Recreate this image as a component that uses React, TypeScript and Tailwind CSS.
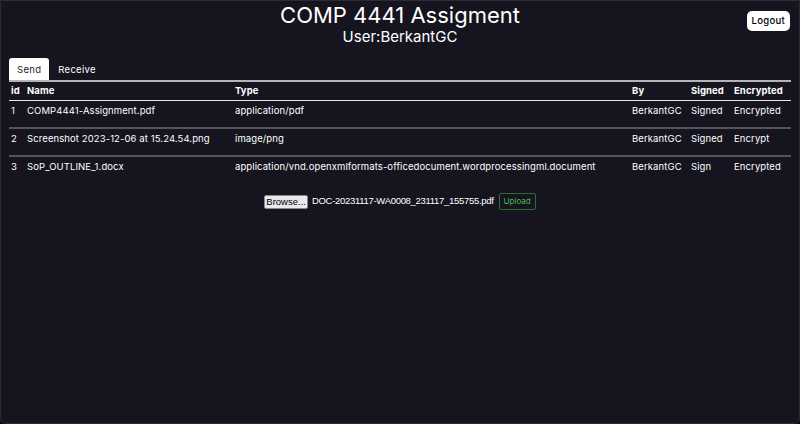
import { useState } from 'react';

const files = [
  { id: 1, name: 'COMP4441-Assignment.pdf', type: 'application/pdf', by: 'BerkantGC', signed: 'Signed', encrypted: 'Encrypted' },
  { id: 2, name: 'Screenshot 2023-12-06 at 15.24.54.png', type: 'image/png', by: 'BerkantGC', signed: 'Signed', encrypted: 'Encrypt' },
  { id: 3, name: 'SoP_OUTLINE_1.docx', type: 'application/vnd.openxmlformats-officedocument.wordprocessingml.document', by: 'BerkantGC', signed: 'Sign', encrypted: 'Encrypted' },
];

export default function App() {
  const [tab, setTab] = useState<'send' | 'receive'>('send');

  const tabClass = (active: boolean) =>
    active
      ? 'rounded-t-[3px] bg-white px-[8px] pb-[5px] pt-[6px] text-[9.5px] leading-[11px] tracking-[0.3px] text-[#222]'
      : 'rounded-t-[3px] px-[9px] pb-[5px] pt-[6px] text-[9.5px] leading-[11px] tracking-[0.3px] text-white';

  return (
    <div className="h-[424px] w-[800px] overflow-hidden bg-[#0c0b12] font-['Inter',sans-serif] text-white">
      <div className="flex h-full flex-col rounded-b-[6px] border border-[#2c2b35] bg-[#15141f] px-2">
        <div className="relative flex flex-col items-center">
          <h1 className="text-[22px] leading-[28px]">COMP 4441 Assigment</h1>
          <div className="-mt-[1px] text-[15px] leading-[18px]">User:BerkantGC</div>
          <button className="absolute right-[1px] top-[10px] rounded-[5px] bg-white px-[5px] py-[4px] text-[9.5px] font-medium leading-[12px] tracking-[0.3px] text-black">
            Logout
          </button>
        </div>

        <div className="mt-[12px] flex border-b-2 border-[#b4b4b8]">
          <button onClick={() => setTab('send')} className={tabClass(tab === 'send')}>
            Send
          </button>
          <button onClick={() => setTab('receive')} className={tabClass(tab === 'receive')}>
            Receive
          </button>
        </div>

        <table className="w-full table-fixed border-collapse whitespace-nowrap text-left text-[9.5px] leading-[12px] tracking-[0.1px]">
          <colgroup>
            <col className="w-[16px]" />
            <col className="w-[208px]" />
            <col />
            <col className="w-[59px]" />
            <col className="w-[43px]" />
            <col className="w-[59px]" />
          </colgroup>
          <thead>
            <tr className="border-b border-[#e6e6e6]">
              <th className="px-[2px] pb-[3px] pt-[3px] font-bold">id</th>
              <th className="px-[2px] pb-[3px] pt-[3px] font-bold">Name</th>
              <th className="px-[2px] pb-[3px] pt-[3px] font-bold">Type</th>
              <th className="px-[2px] pb-[3px] pt-[3px] font-bold">By</th>
              <th className="px-[2px] pb-[3px] pt-[3px] font-bold">Signed</th>
              <th className="px-[2px] pb-[3px] pt-[3px] font-bold">Encrypted</th>
            </tr>
          </thead>
          <tbody>
            {files.map((f, i) => (
              <tr key={f.id} className={i < files.length - 1 ? 'border-b-2 border-[#55545c]' : ''}>
                <td className="px-[2px] pb-[10px] pt-[4px] align-top">{f.id}</td>
                <td className="px-[2px] pb-[10px] pt-[4px] align-top">{f.name}</td>
                <td className="px-[2px] pb-[10px] pt-[4px] align-top">{f.type}</td>
                <td className="px-[2px] pb-[10px] pt-[4px] align-top">{f.by}</td>
                <td className="px-[2px] pb-[10px] pt-[4px] align-top">{f.signed}</td>
                <td className="px-[2px] pb-[10px] pt-[4px] align-top">{f.encrypted}</td>
              </tr>
            ))}
          </tbody>
        </table>

        <div className="mt-[10px] flex items-center justify-center gap-[4px]">
          <span className="rounded-[2px] border border-[#888] bg-[#e9e9ed] px-[1px] font-['Liberation_Sans',sans-serif] text-[9.5px] leading-[12px] text-black">
            Browse...
          </span>
          <span className="font-['Liberation_Sans',sans-serif] text-[9.5px] tracking-[-0.3px]">DOC-20231117-WA0008_231117_155755.pdf</span>
          <button className="ml-[1px] rounded-[2px] border border-[#2f6b2f] px-[4px] py-[3px] text-[8px] leading-[9px] text-[#4fb54f]">
            Upload
          </button>
        </div>
      </div>
    </div>
  );
}
